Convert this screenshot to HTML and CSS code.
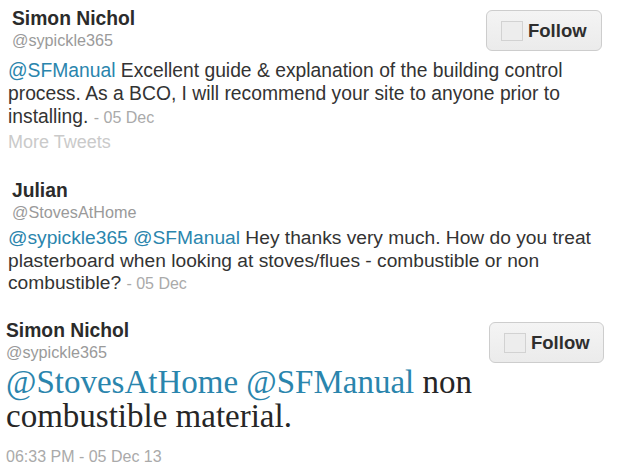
FILE: index.html
```html
<!DOCTYPE html>
<html>
<head>
<meta charset="utf-8">
<link rel="stylesheet" href="styles.css">
</head>
<body>
<div class="page">
  <section class="tweet first">
    <div class="head">
      <div class="who">
        <div class="name">Simon Nichol</div>
        <div class="handle">@sypickle365</div>
      </div>
      <button class="follow"><span class="box"></span>Follow</button>
    </div>
    <p class="text"><a class="mention">@SFManual</a> Excellent guide &amp; explanation of the building control process. As a BCO, I will recommend your site to anyone prior to installing. <span class="date">- 05 Dec</span></p>
    <div class="more">More Tweets</div>
  </section>

  <section class="tweet second">
    <div class="who">
      <div class="name">Julian</div>
      <div class="handle">@StovesAtHome</div>
    </div>
    <p class="text"><a class="mention">@sypickle365</a> <a class="mention">@SFManual</a> Hey thanks very much. How do you treat plasterboard when looking at stoves/flues - combustible or non combustible? <span class="date">- 05 Dec</span></p>
  </section>

  <section class="tweet third">
    <div class="head">
      <div class="who">
        <div class="name">Simon Nichol</div>
        <div class="handle">@sypickle365</div>
      </div>
      <button class="follow"><span class="box"></span>Follow</button>
    </div>
    <p class="big"><a class="mention">@StovesAtHome</a> <a class="mention">@SFManual</a> non combustible material.</p>
    <div class="stamp">06:33 PM - 05 Dec 13</div>
  </section>
</div>
</body>
</html>
```

FILE: styles.css
```css
* { box-sizing: border-box; }
html, body { margin: 0; padding: 0; background: #fff; }
body { font-family: "Liberation Sans", Arial, sans-serif; color: #333; }
.page { width: 640px; height: 466px; overflow: hidden; }

.head { display: flex; justify-content: space-between; align-items: flex-start; }
.name { font-weight: bold; font-size: 19.3px; line-height: 22px; color: #2b2b2b; }
.handle { font-size: 16.2px; line-height: 20px; color: #9a9a9a; }

.follow {
  display: flex; align-items: center; gap: 5px;
  width: 116px; height: 41px; padding: 1px 0 0 14px;
  border: 1px solid #cdcdcd; border-radius: 6px;
  background: linear-gradient(#f4f4f4, #ebebeb);
  font-family: "Liberation Sans", Arial, sans-serif;
  font-weight: bold; font-size: 18.5px; color: #2e2e2e;
}
.box { width: 22px; height: 20px; border: 1px solid #d2d2d2; background: #ededed; }

.text { margin: 0; color: #333; }
.mention { color: #2a85ad; text-decoration: none; }
.date { font-size: 16px; color: #aaa; }
.more { font-size: 18px; line-height: 21px; color: #cacaca; }

.first { padding: 8px 38px 0 12px; }
.first .follow { margin-top: 2px; }
.first .text { margin: 8px 0 0 -4px; font-size: 19.3px; line-height: 23px; }
.first .more { margin: 3px 0 0 -4px; }

.second { padding: 27px 20px 0 12px; }
.second .text { margin: 5px 0 0 -4px; font-size: 19.2px; line-height: 22.5px; }

.third { padding: 24px 36px 0 6px; }
.third .follow { width: 115px; margin-top: 2px; }
.big { margin: 2px 0 0 0; font-family: "Liberation Serif", "Times New Roman", serif; font-size: 33px; line-height: 34px; color: #262626; }
.stamp { margin-top: 14px; font-size: 16px; line-height: 20px; color: #aaa; }
```
